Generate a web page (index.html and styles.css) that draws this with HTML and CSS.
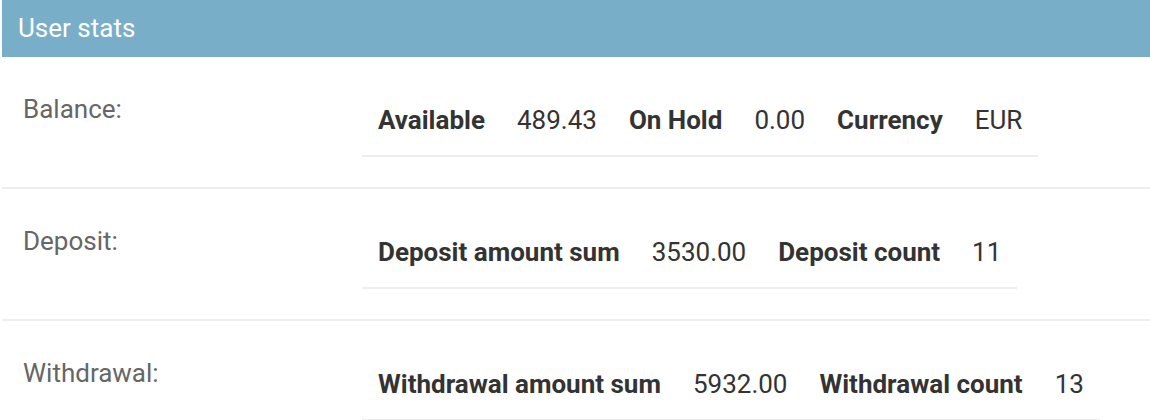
FILE: index.html
```html
<!DOCTYPE html>
<html lang="en">
<head>
    <meta charset="UTF-8">
    <meta name="viewport" content="width=device-width, initial-scale=1.0">
    <title>User stats</title>
    <link rel="stylesheet" href="styles.css">
</head>
<body>
    <fieldset class="module">
        <h2>User stats</h2>

        <div class="form-row">
            <label>Balance:</label>
            <div class="readonly">
                <table>
                    <tr>
                        <th>Available</th><td>489.43</td>
                        <th>On Hold</th><td>0.00</td>
                        <th>Currency</th><td>EUR</td>
                    </tr>
                </table>
            </div>
        </div>

        <div class="form-row">
            <label>Deposit:</label>
            <div class="readonly">
                <table>
                    <tr>
                        <th>Deposit amount sum</th><td>3530.00</td>
                        <th>Deposit count</th><td>11</td>
                    </tr>
                </table>
            </div>
        </div>

        <div class="form-row">
            <label>Withdrawal:</label>
            <div class="readonly">
                <table>
                    <tr>
                        <th>Withdrawal amount sum</th><td>5932.00</td>
                        <th>Withdrawal count</th><td>13</td>
                    </tr>
                </table>
            </div>
        </div>
    </fieldset>
</body>
</html>
```

FILE: styles.css
```css
body {
    margin: 0;
    font-family: Roboto, "Liberation Sans", Arial, sans-serif;
    background-color: #fff;
    color: #333;
}
.module {
    margin: 0 0 0 2px;
    padding: 0;
    border: none;
    min-width: 0;
}
.module h2 {
    margin: 0;
    height: 57px;
    line-height: 56px;
    padding: 0 16px;
    background-color: #79aec8;
    color: white;
    font-size: 26px;
    font-weight: 400;
}
/* one row per stat group */
.form-row {
    display: flex;
    align-items: flex-start;
    padding: 29px 0 30px 21px;
    border-bottom: 2px solid #eee;
}
.form-row label {
    flex: 0 0 339px;
    padding-top: 8px;
    line-height: 30px;
    font-size: 26px;
    color: #666;
}
.readonly table {
    border-collapse: collapse;
}
.readonly th,
.readonly td {
    padding: 16px;
    line-height: 37px;
    font-size: 26px;
    color: #333;
    text-align: left;
    border-bottom: 2px solid #eee;
    white-space: nowrap;
}
.readonly th {
    font-weight: bold;
}
.readonly td {
    font-weight: 400;
}
```
